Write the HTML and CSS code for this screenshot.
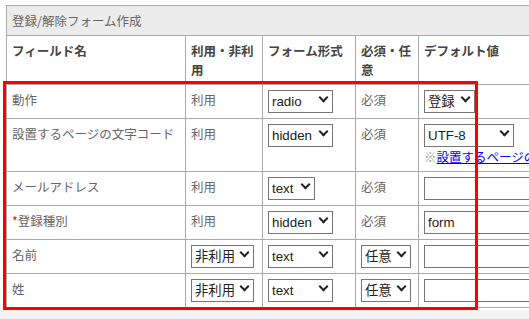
FILE: index.html
```html
<!DOCTYPE html>
<html lang="ja">
<head>
    <meta charset="UTF-8">
    <title>登録/解除フォーム作成</title>
    <link rel="stylesheet" href="styles.css">
</head>
<body>

    <div class="page">
        <table class="form-table">
            <colgroup>
                <col class="c-name">
                <col class="c-use">
                <col class="c-type">
                <col class="c-req">
                <col class="c-def">
            </colgroup>
            <tr>
                <th colspan="5" class="caption">登録/解除フォーム作成</th>
            </tr>
            <tr>
                <th>フィールド名</th>
                <th>利用・非利用</th>
                <th>フォーム形式</th>
                <th>必須・任意</th>
                <th>デフォルト値</th>
            </tr>
            <tr>
                <td>動作</td>
                <td>利用</td>
                <td><span class="sel"><select class="w65"><option>radio</option></select></span></td>
                <td>必須</td>
                <td><span class="sel"><select class="w51"><option>登録</option></select></span></td>
            </tr>
            <tr>
                <td>設置するページの文字コード</td>
                <td>利用</td>
                <td><span class="sel"><select class="w65"><option>hidden</option></select></span></td>
                <td>必須</td>
                <td>
                    <span class="sel"><select class="w90"><option>UTF-8</option></select></span>
                    <div class="note">※<a href="#">設置するページの文字コードを選択</a></div>
                </td>
            </tr>
            <tr>
                <td>メールアドレス</td>
                <td>利用</td>
                <td><span class="sel"><select class="w47"><option>text</option></select></span></td>
                <td>必須</td>
                <td><input type="text" class="field"></td>
            </tr>
            <tr>
                <td><span class="req">*</span>登録種別</td>
                <td>利用</td>
                <td><span class="sel"><select class="w65"><option>hidden</option></select></span></td>
                <td>必須</td>
                <td><input type="text" class="field" value="form"></td>
            </tr>
            <tr>
                <td>名前</td>
                <td><span class="sel"><select class="w63"><option>非利用</option></select></span></td>
                <td><span class="sel"><select class="w65"><option>text</option></select></span></td>
                <td><span class="sel"><select class="w50"><option>任意</option></select></span></td>
                <td><input type="text" class="field"></td>
            </tr>
            <tr>
                <td>姓</td>
                <td><span class="sel"><select class="w63"><option>非利用</option></select></span></td>
                <td><span class="sel"><select class="w65"><option>text</option></select></span></td>
                <td><span class="sel"><select class="w50"><option>任意</option></select></span></td>
                <td><input type="text" class="field"></td>
            </tr>
            <tr class="spacer">
                <td></td>
                <td></td>
                <td></td>
                <td></td>
                <td></td>
            </tr>
        </table>

        <div class="highlight"></div>
    </div>

</body>
</html>
```

FILE: styles.css
```css
body {
    margin: 0;
    background-color: #f4f4f4;
    font-family: "Noto Sans CJK JP", sans-serif;
}
.page {
    position: relative;
    height: 310px;
    overflow: hidden;
    background-color: #fff;
    padding: 5px 0 0 6px;
    box-sizing: border-box;
}
.form-table {
    border-collapse: collapse;
    table-layout: fixed;
    width: 640px;
    font-size: 12.5px;
    line-height: 19px;
    color: #666;
}
.c-name { width: 179px; }
.c-use { width: 77px; }
.c-type { width: 93px; }
.c-req { width: 63px; }
.c-def { width: 228px; }
.form-table th,
.form-table td {
    border: 1px solid #aaa;
    padding: 5px;
    text-align: left;
    vertical-align: top;
}
.form-table th {
    font-weight: bold;
    color: #444;
}
.form-table th.caption {
    background-color: #ececec;
    font-weight: normal;
    color: #666;
}
.spacer td {
    height: 24px;
}
.req {
    color: #e00;
}
.sel {
    position: relative;
    display: inline-block;
    vertical-align: top;
}
.sel::after {
    content: "";
    position: absolute;
    right: 6px;
    top: 4px;
    width: 5px;
    height: 5px;
    border-right: 2px solid #222;
    border-bottom: 2px solid #222;
    transform: rotate(45deg);
    pointer-events: none;
}
select {
    -webkit-appearance: none;
    appearance: none;
    display: block;
    height: 23px;
    margin: 0;
    padding: 0 3px;
    border: 1px solid #767676;
    border-radius: 0;
    background-color: #fff;
    font-family: "Liberation Sans", "Noto Sans CJK JP", sans-serif;
    font-size: 13.33px;
    color: #222;
}
.w47 { width: 47px; }
.w50 { width: 50px; }
.w51 { width: 51px; }
.w63 { width: 63px; }
.w65 { width: 65px; }
.w90 { width: 90px; }
.field {
    display: block;
    width: 170px;
    height: 23px;
    margin: 0;
    padding: 0 3px;
    border: 1px solid #767676;
    border-radius: 0;
    box-sizing: border-box;
    font-family: "Liberation Sans", sans-serif;
    font-size: 13.33px;
    color: #222;
}
.note {
    white-space: nowrap;
    color: #999;
}
.note a {
    color: #0000ff;
}
.highlight {
    position: absolute;
    left: 3px;
    top: 81px;
    width: 475px;
    height: 229px;
    border: 3px solid #f00;
    box-sizing: border-box;
    pointer-events: none;
}
```
